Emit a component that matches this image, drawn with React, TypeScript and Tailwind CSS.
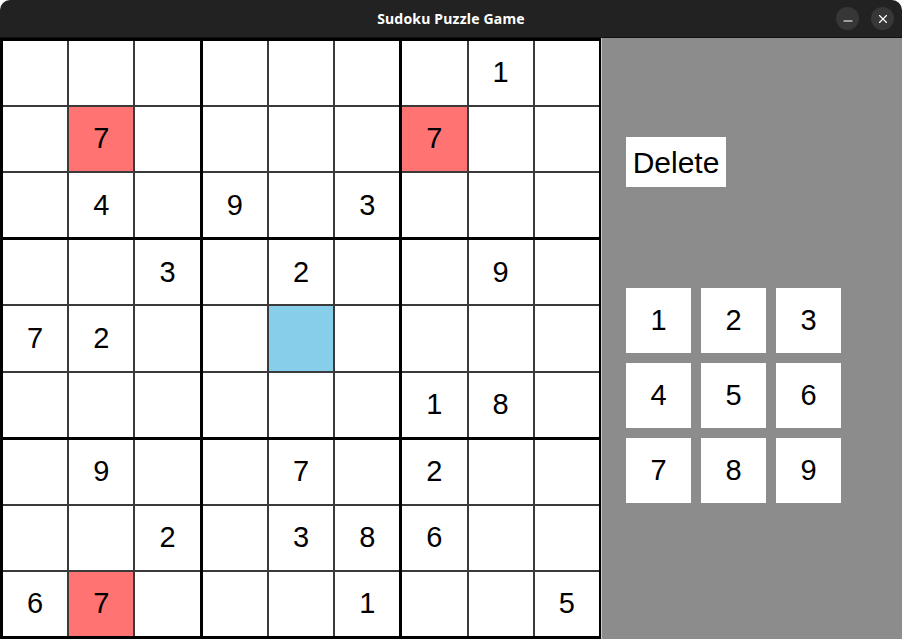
import { Minus, X } from "lucide-react";

type Cell = { v?: number; bg?: "red" | "blue" };

const rows: Cell[][] = [
  [{}, {}, {}, {}, {}, {}, {}, { v: 1 }, {}],
  [{}, { v: 7, bg: "red" }, {}, {}, {}, {}, { v: 7, bg: "red" }, {}, {}],
  [{}, { v: 4 }, {}, { v: 9 }, {}, { v: 3 }, {}, {}, {}],
  [{}, {}, { v: 3 }, {}, { v: 2 }, {}, {}, { v: 9 }, {}],
  [{ v: 7 }, { v: 2 }, {}, {}, { bg: "blue" }, {}, {}, {}, {}],
  [{}, {}, {}, {}, {}, {}, { v: 1 }, { v: 8 }, {}],
  [{}, { v: 9 }, {}, {}, { v: 7 }, {}, { v: 2 }, {}, {}],
  [{}, {}, { v: 2 }, {}, { v: 3 }, { v: 8 }, { v: 6 }, {}, {}],
  [{ v: 6 }, { v: 7, bg: "red" }, {}, {}, {}, { v: 1 }, {}, {}, { v: 5 }],
];

const TitleBar = () => (
  <div className="h-[38px] bg-[#222222] rounded-t-[10px] border-b border-[#111] flex items-center relative shrink-0">
    <div className="flex-1 text-center text-white font-bold text-[14px] font-['Noto_Sans',sans-serif] tracking-[0.2px]">
      Sudoku Puzzle Game
    </div>
    <div className="absolute right-[8px] top-[7px] flex gap-[12px]">
      <div className="w-[23px] h-[23px] rounded-full bg-[#373737] flex items-center justify-center">
        <Minus size={14} color="white" strokeWidth={2} className="mt-[4px]" />
      </div>
      <div className="w-[23px] h-[23px] rounded-full bg-[#373737] flex items-center justify-center">
        <X size={14} color="white" strokeWidth={2} />
      </div>
    </div>
  </div>
);

const Board = () => {
  // 3x3 blocks, each holding 3x3 cells
  const blocks = [0, 1, 2].flatMap((br) => [0, 1, 2].map((bc) => [br, bc]));
  return (
    <div className="w-[601px] h-[601px] shrink-0 bg-black border-[3px] border-black grid grid-cols-3 grid-rows-3 gap-[3px] border-r-[2px]">
      {blocks.map(([br, bc]) => (
        <div key={`${br}-${bc}`} className="bg-[#3a3a3a] grid grid-cols-3 grid-rows-3 gap-[2px]">
          {[0, 1, 2].flatMap((r) =>
            [0, 1, 2].map((c) => {
              const cell = rows[br * 3 + r][bc * 3 + c];
              const bg =
                cell.bg === "red" ? "bg-[#ff7373]" : cell.bg === "blue" ? "bg-[#87ceeb]" : "bg-white";
              return (
                <div
                  key={`${r}-${c}`}
                  className={`${bg} flex items-center justify-center text-[29px] text-black font-['Liberation_Sans',Arial,sans-serif]`}
                >
                  {cell.v ?? ""}
                </div>
              );
            })
          )}
        </div>
      ))}
    </div>
  );
};

const SidePanel = () => (
  <div className="flex-1 bg-[#8c8c8c] pl-[24px] pt-[99px] border-l border-[#c8c8c8] font-['Liberation_Sans',Arial,sans-serif]">
    <button className="w-[100px] h-[50px] bg-white text-black text-[30px] flex items-center justify-center">
      Delete
    </button>
    <div className="mt-[101px] grid grid-cols-[65px_65px_65px] gap-[10px]">
      {[1, 2, 3, 4, 5, 6, 7, 8, 9].map((n) => (
        <button key={n} className="w-[65px] h-[65px] bg-white text-black text-[29px] flex items-center justify-center">
          {n}
        </button>
      ))}
    </div>
  </div>
);

export default function App() {
  return (
    <div className="w-[902px] h-[639px] bg-white flex flex-col overflow-hidden">
      <TitleBar />
      <div className="flex flex-1">
        <Board />
        <SidePanel />
      </div>
    </div>
  );
}
